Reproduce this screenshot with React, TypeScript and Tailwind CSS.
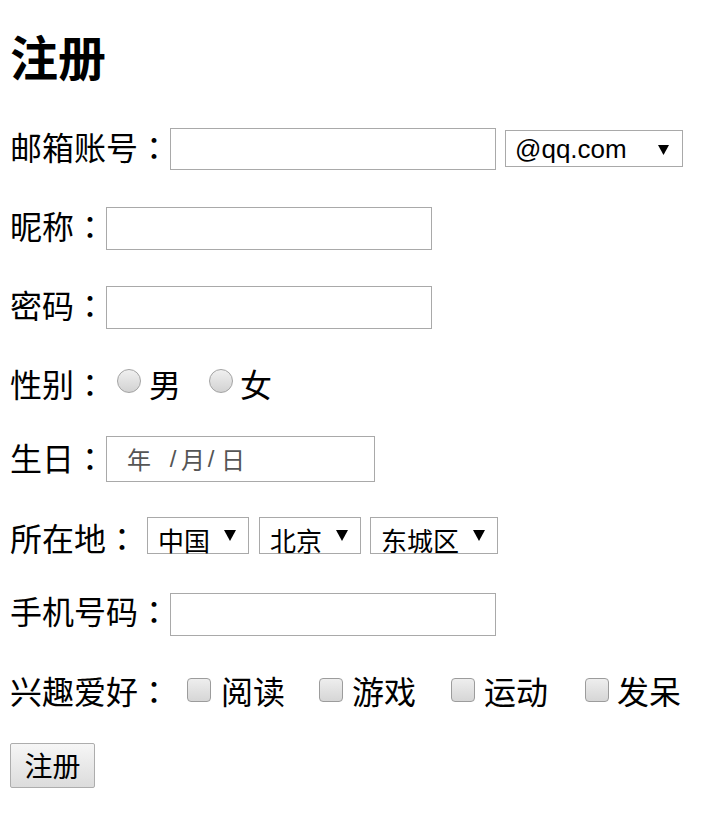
import React from "react";

type SelectProps = {
  value: string;
  className: string;
  latin?: boolean;
};

// label text with a centred full-width colon (the TC face centres its punctuation)
const Label: React.FC<{ text: string }> = ({ text }) => (
  <span>
    {text}
    <span className="font-['Noto_Sans_CJK_TC',sans-serif]">：</span>
  </span>
);

// looks like the old windows dropdown: grey border, black triangle on the right
const FakeSelect: React.FC<SelectProps> = ({ value, className, latin }) => {
  return (
    <div
      className={
        "flex h-[37px] items-center justify-between border border-[#a9a9a9] bg-white " +
        className
      }
    >
      {latin ? (
        <span className="pl-[9px] font-['Liberation_Sans',Arial,sans-serif] text-[26px] leading-none">
          {value}
        </span>
      ) : (
        <span className="mt-[9px] pl-[10px] text-[26px] leading-none">{value}</span>
      )}
      {latin ? (
        <svg width="11" height="10" viewBox="0 0 11 10" className="mr-[13px] mt-[2px]">
          <polygon points="0,0 11,0 5.5,10" fill="#000" />
        </svg>
      ) : (
        <svg width="12" height="11" viewBox="0 0 12 11" className="mr-[12px]">
          <polygon points="0,0 12,0 6,11" fill="#000" />
        </svg>
      )}
    </div>
  );
};

const Radio: React.FC<{ className: string }> = ({ className }) => (
  <input
    type="radio"
    name="sex"
    className={
      "h-6 w-6 shrink-0 appearance-none rounded-full border border-[#a3a3a3] bg-linear-to-b from-[#f0f0f0] to-[#d2d2d2] " +
      className
    }
  />
);

const Check: React.FC<{ className: string }> = ({ className }) => (
  <input
    type="checkbox"
    className={
      "h-6 w-6 shrink-0 appearance-none rounded-[4px] border border-[#9c9c9c] bg-linear-to-b from-[#eeeeee] to-[#d6d6d6] " +
      className
    }
  />
);

export default function App() {
  return (
    <div className="min-h-[826px] bg-white px-[10px] text-black font-['Noto_Sans_CJK_SC',sans-serif]">
      <h1 className="h-[79px] pt-[31px] text-[48px] font-bold leading-none">注册</h1>

      <form className="text-[32px] leading-none" onSubmit={(e) => e.preventDefault()}>
        <div className="mt-[43px] flex h-12 items-center">
          <Label text="邮箱账号" />
          <input type="text" className="mt-[6px] h-[42px] w-[326px] border border-[#a9a9a9] bg-white outline-none" />
          <FakeSelect value="@qq.com" latin className="ml-[9px] mt-[5px] w-[178px]" />
        </div>

        <div className="mt-[31px] flex h-12 items-center">
          <Label text="昵称" />
          <input type="text" className="mt-[7px] h-[43px] w-[326px] border border-[#a9a9a9] bg-white outline-none" />
        </div>

        <div className="mt-[31px] flex h-12 items-center">
          <Label text="密码" />
          <input type="password" className="mt-[7px] h-[43px] w-[326px] border border-[#a9a9a9] bg-white outline-none" />
        </div>

        <div className="mt-[31px] flex h-12 items-center">
          <Label text="性别" />
          <Radio className="mb-[4px] ml-[11px]" />
          <span className="ml-[8px]">男</span>
          <Radio className="mb-[4px] ml-[28px]" />
          <span className="ml-[7px]">女</span>
        </div>

        <div className="mt-[26px] flex h-12 items-center">
          <Label text="生日" />
          <div className="mt-[4px] flex h-[46px] w-[269px] items-center border border-[#a9a9a9] bg-white pl-[20px] text-[24px] leading-none text-[#555]">
            <span>年</span>
            <span className="ml-[17px] w-[10px] text-center font-['Liberation_Sans',sans-serif]">/</span>
            <span className="ml-[3px]">月</span>
            <span className="ml-[1px] w-[10px] text-center font-['Liberation_Sans',sans-serif]">/</span>
            <span className="ml-[5px]">日</span>
          </div>
        </div>

        <div className="mt-[32px] flex h-12 items-center">
          <Label text="所在地" />
          <FakeSelect value="中国" className="mb-[3px] ml-[9px] w-[102px]" />
          <FakeSelect value="北京" className="mb-[3px] ml-[10px] w-[102px]" />
          <FakeSelect value="东城区" className="mb-[3px] ml-[9px] w-[128px]" />
        </div>

        <div className="mt-[25px] flex h-12 items-center">
          <Label text="手机号码" />
          <input type="tel" className="mt-[9px] h-[43px] w-[326px] border border-[#a9a9a9] bg-white outline-none" />
        </div>

        <div className="mt-[32px] flex h-12 items-center">
          <Label text="兴趣爱好" />
          <Check className="ml-[17px]" />
          <span className="ml-[10px]">阅读</span>
          <Check className="ml-[34px]" />
          <span className="ml-[9px]">游戏</span>
          <Check className="ml-[35px]" />
          <span className="ml-[9px]">运动</span>
          <Check className="ml-[37px]" />
          <span className="ml-[8px]">发呆</span>
        </div>

        <div className="mt-[27px] flex h-12 items-center">
          <button
            type="submit"
            className="h-[45px] w-[85px] rounded-[2px] border border-[#adadad] bg-linear-to-b from-[#f6f6f6] to-[#dcdcdc] text-[28px] leading-none"
          >
            注册
          </button>
        </div>
      </form>
    </div>
  );
}
